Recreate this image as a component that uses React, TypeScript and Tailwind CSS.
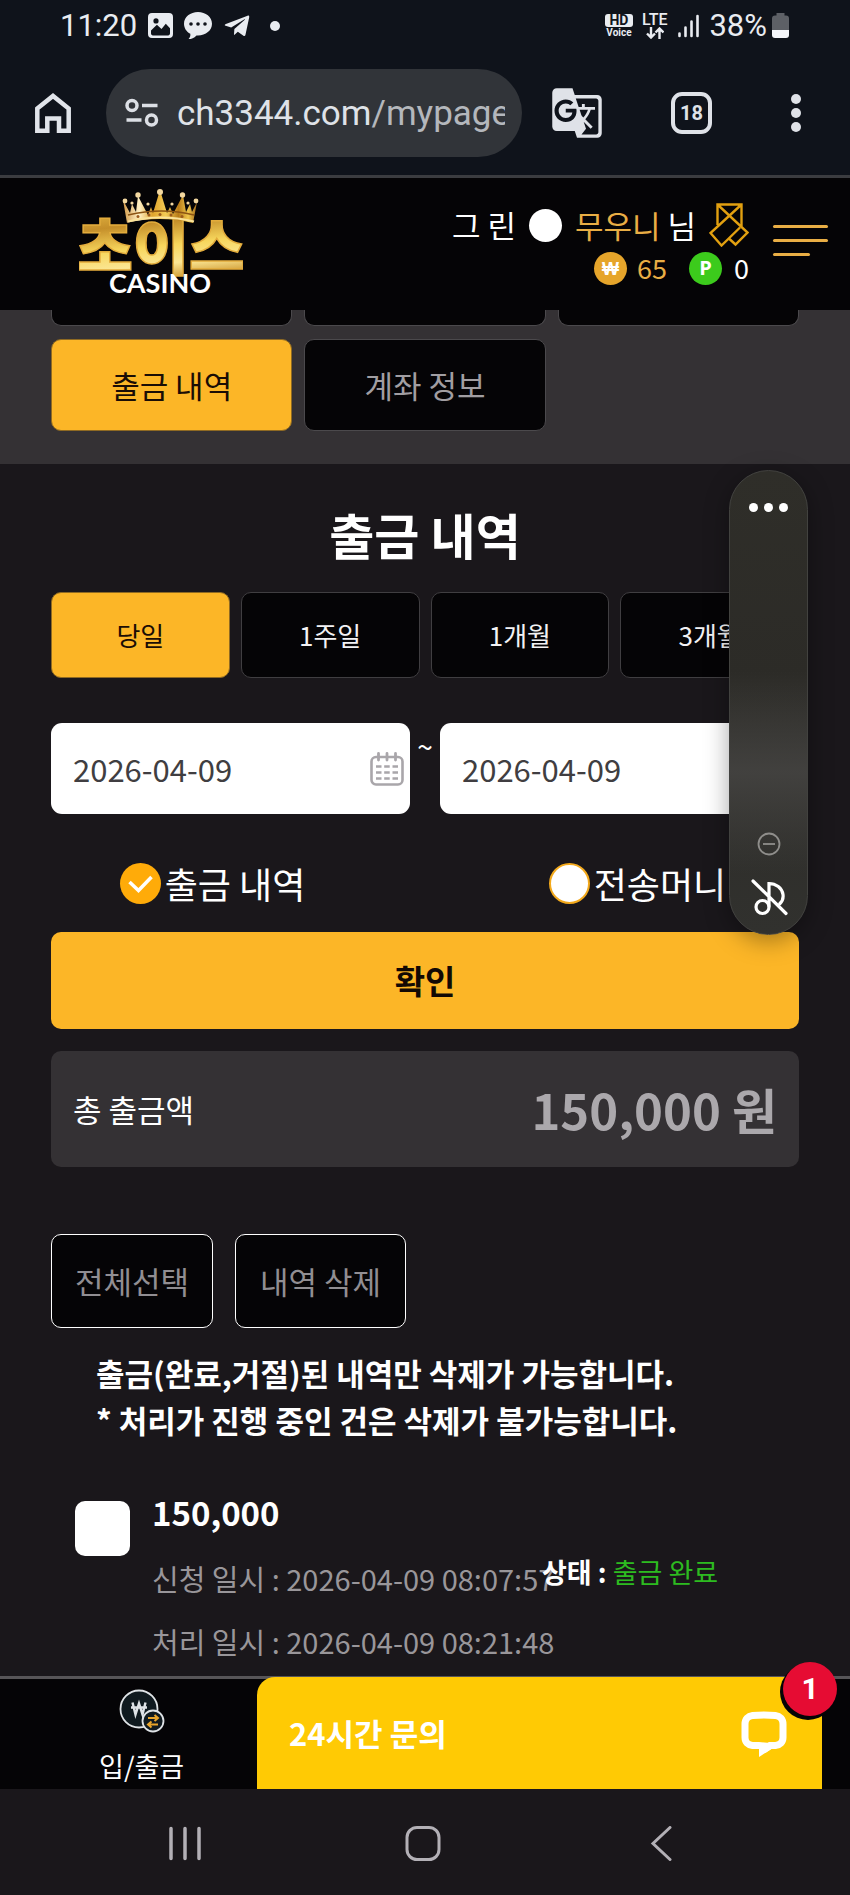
import { FaTelegramPlane } from "react-icons/fa";
import { MdGTranslate } from "react-icons/md";

function ImageIcon() {
  return (
    <svg width="25" height="26" viewBox="0 0 25 26" aria-hidden="true">
      <path
        fill="#e9ecf1"
        fillRule="evenodd"
        d="M4 0h17a4 4 0 0 1 4 4v17a4 4 0 0 1-4 4H4a4 4 0 0 1-4-4V4a4 4 0 0 1 4-4Zm-1 20.500c0 1 .8 1.900 1.900 1.900h15.200c1 0 1.900-.8 1.900-1.900v-5.300l-4.200-4.400-4.300 5.200-4.600-4.200L3 17.500Zm5-15.200a2.600 2.600 0 1 0 0 5.200 2.600 2.600 0 0 0 0-5.200Z"
      />
    </svg>
  );
}

function TalkIcon() {
  return (
    <svg width="28" height="28" viewBox="0 0 28 28" aria-hidden="true">
      <path fill="#e9ecf1" d="M14 0c7.700 0 14 5 14 11.700S21.700 23.400 14 23.400h-1.500C10 26 7.600 27 4.600 27c1.500-1.600 2-3.200 1.700-5.200C2.500 19.700 0 16 0 11.700 0 5 6.300 0 14 0Z" />
      <g fill="#10141c">
        <circle cx="7" cy="12" r="1.800" />
        <circle cx="14" cy="12" r="1.800" />
        <circle cx="21" cy="12" r="1.800" />
      </g>
    </svg>
  );
}

function StatusBar() {
  return (
    <div className="flex h-[52px] items-center justify-between pl-[60px] pr-[61px] font-[Roboto,sans-serif] text-[#e9ecf1]">
      <div className="flex items-center gap-[11px]">
        <span className="text-[31px] leading-9">11:20</span>
        <ImageIcon />
        <TalkIcon />
        <FaTelegramPlane className="size-7" aria-hidden="true" />
        <span className="ml-2 size-[10px] rounded-full bg-[#e9ecf1]" />
      </div>
      <div className="flex items-center gap-[9px]">
        <div className="flex w-7 flex-col items-center font-bold">
          <span className="w-full rounded-[3px] bg-[#e9ecf1] text-center text-[14px] leading-[13px] text-[#10141c]">HD</span>
          <span className="text-[10px] leading-[11px]">Voice</span>
        </div>
        <div className="flex flex-col items-center font-medium">
          <span className="text-[16px] leading-[14px]">LTE</span>
          <svg width="18" height="12" viewBox="0 0 18 12" fill="none" stroke="#e9ecf1" strokeWidth="2.400" aria-hidden="true">
            <path d="M5 0v10M1 6.500l4 4 4-4M13.500 12V1.500M9.500 5.500l4-4 4 4" />
          </svg>
        </div>
        <svg width="24" height="24" viewBox="0 0 24 24" stroke="#e9ecf1" strokeWidth="2.600" strokeLinecap="round" aria-hidden="true">
          <path d="M3.500 19.500V22M9.500 13.500V22M15.500 7.500V22M21.500 2V22" />
        </svg>
        <span className="text-[31px] leading-9">38%</span>
        <svg width="17" height="26" viewBox="0 0 17 26" className="-ml-1" aria-hidden="true">
          <path fill="#5d6066" d="M4.500 0h8v2.500H14a3 3 0 0 1 3 3V18H0V5.500a3 3 0 0 1 3-3h1.500Z" />
          <path fill="#f4f6fa" d="M0 17h17v5a3 3 0 0 1-3 3H3a3 3 0 0 1-3-3Z" />
        </svg>
      </div>
    </div>
  );
}

function BrowserBar() {
  return (
    <div className="flex items-center border-b-[3px] border-[#3b3c40] pb-[18px] pl-[34px] pr-[49px] pt-[17px] font-[Roboto,sans-serif]">
      <button type="button" aria-label="홈" className="shrink-0">
        <svg width="38" height="42" viewBox="0 0 38 42" fill="none" stroke="#e1e4ea" strokeWidth="4.500" aria-hidden="true">
          <path d="M3.300 16.500 19 4l15.700 12.500v22.200H25V26.500H13.300v12.200h-10Z" />
        </svg>
      </button>
      <div className="ml-[34px] flex h-[88px] min-w-0 flex-1 items-center rounded-full bg-[#313439] pl-[19px] pr-[17px]">
        <svg width="34" height="30" viewBox="0 0 34 30" fill="none" stroke="#dcdfe5" strokeWidth="3.500" className="shrink-0" aria-hidden="true">
          <circle cx="7" cy="7.500" r="5" />
          <circle cx="26.500" cy="22" r="5" />
          <path d="M17 7.500h15.500M1.500 22h15" />
        </svg>
        <span className="ml-[18px] block min-w-0 flex-1 overflow-hidden whitespace-nowrap pt-[2px] text-[35px] leading-[44px] text-[#dfe2e8]">
          ch3344.com<span className="text-[#b4b7bc]">/mypage</span>
        </span>
      </div>
      <button type="button" aria-label="번역" className="ml-7 shrink-0">
        <MdGTranslate className="size-[54px] text-[#dfe2e8]" aria-hidden="true" />
      </button>
      <button type="button" className="ml-[67px] flex h-[42px] w-[41px] shrink-0 items-center justify-center rounded-[11px] border-4 border-[#dfe2e8] text-[20px] font-bold leading-6 text-[#dfe2e8]">
        18
      </button>
      <button type="button" aria-label="메뉴" className="ml-[79px] flex shrink-0 flex-col gap-1">
        <span className="size-[10px] rounded-full bg-[#dfe2e8]" />
        <span className="size-[10px] rounded-full bg-[#dfe2e8]" />
        <span className="size-[10px] rounded-full bg-[#dfe2e8]" />
      </button>
    </div>
  );
}

function Logo() {
  return (
    <svg width="164" height="116" viewBox="0 0 164 116" role="img" aria-label="초이스 CASINO">
      <defs>
        <linearGradient id="gold" x1="0" y1="0" x2="0.200" y2="1">
          <stop offset="0" stopColor="#f6cf52" />
          <stop offset="0.350" stopColor="#c58f2a" />
          <stop offset="0.600" stopColor="#f7d65c" />
          <stop offset="0.800" stopColor="#fbe694" />
          <stop offset="1" stopColor="#c88f24" />
        </linearGradient>
        <linearGradient id="crown" x1="0" y1="0" x2="1" y2="0">
          <stop offset="0" stopColor="#d39a4a" />
          <stop offset="0.220" stopColor="#fff0c4" />
          <stop offset="0.400" stopColor="#dfa32c" />
          <stop offset="0.580" stopColor="#f3cb55" />
          <stop offset="0.750" stopColor="#b77b18" />
          <stop offset="0.880" stopColor="#f0c64a" />
          <stop offset="1" stopColor="#a26a1c" />
        </linearGradient>
      </defs>
      <text
        x="82"
        y="84"
        textAnchor="middle"
        fontFamily="'Noto Sans CJK KR', sans-serif"
        fontWeight="900"
        fontSize="61"
        fill="url(#gold)"
        stroke="#e3ac3c"
        strokeWidth="1.500"
      >
        초이스
      </text>
      <path
        fill="url(#crown)"
        d="M48 37 44 14l7 13 2-9 4 8 2-16 10 19 3-8 2 6 7-23 7 23 3-6 3 7 10-19 3 17 4-8 2 8 5-10-4 21q-33-8-67 0Z"
      />
      <path d="M49 29q34-8 66 0" fill="none" stroke="#8c5413" strokeWidth="1.500" />
      <path d="M49 35.500q33-8 66 0" fill="none" stroke="#fbe39a" strokeWidth="2" />
      <g fill="#f3d8a0">
        <circle cx="46" cy="15" r="2.400" />
        <circle cx="59" cy="9" r="2.700" />
        <circle cx="81" cy="6" r="3" />
        <circle cx="103.500" cy="9" r="2.700" />
        <circle cx="117" cy="15" r="2.400" />
        <circle cx="53" cy="17" r="1.600" />
        <circle cx="69" cy="18" r="1.600" />
        <circle cx="93" cy="18" r="1.600" />
        <circle cx="109" cy="17" r="1.600" />
      </g>
      <g fill="#9c5a1c">
        <circle cx="59" cy="30.500" r="1.500" />
        <circle cx="70" cy="29" r="1.500" />
        <circle cx="81" cy="28.500" r="1.500" />
        <circle cx="92" cy="29" r="1.500" />
        <circle cx="103" cy="30.500" r="1.500" />
      </g>
      <text x="81" y="107" textAnchor="middle" fontFamily="Lato, sans-serif" fontWeight="700" fontSize="27" fill="#fff">
        CASINO
      </text>
    </svg>
  );
}

function SiteHeader() {
  return (
    <header className="flex items-start justify-between bg-[#050406] pb-2 pl-[79px] pr-[22px] pt-2">
      <a href="#home">
        <Logo />
      </a>
      <div className="flex items-start gap-6 pt-[17px] text-white">
        <div className="flex flex-col items-end gap-[3px]">
          <div className="flex h-11 items-center gap-[13px] text-[31px] leading-[44px]">
            <span>그 린</span>
            <span className="size-[33px] rounded-full bg-white" />
            <span>
              <span className="text-[#e9ae45]">무우니</span> 님
            </span>
            <svg width="40" height="44" viewBox="0 0 40 44" fill="none" stroke="#e2a010" strokeWidth="2.400" aria-hidden="true">
              <path d="M8.500 22V1.500h24V24M8.500 1.500l30 28L26.500 41.500l-6-5.500M32.500 1.500 1.500 30 12.500 42.500 31 24.500" />
            </svg>
          </div>
          <div className="flex h-9 items-center text-[27px] leading-9">
            <span className="flex size-[33px] items-center justify-center rounded-full bg-[#e6a52b] font-['Open_Sans',sans-serif] text-[18px] font-extrabold">₩</span>
            <span className="ml-[10px] text-[#e9ae45]">65</span>
            <span className="ml-[22px] flex size-[33px] items-center justify-center rounded-full bg-[#3ccb1c] font-['Open_Sans',sans-serif] text-[20px] font-bold">P</span>
            <span className="ml-3">0</span>
          </div>
        </div>
        <button type="button" aria-label="전체 메뉴" className="mt-[22px] flex w-[55px] flex-col gap-[11px]">
          <span className="h-[3px] w-full rounded-full bg-[#e9ae45]" />
          <span className="h-[3px] w-full rounded-full bg-[#e9ae45]" />
          <span className="h-[3px] w-[37px] rounded-full bg-[#e9ae45]" />
        </button>
      </div>
    </header>
  );
}

function SectionNav() {
  return (
    <nav className="grid grid-cols-3 gap-x-3 gap-y-[13px] bg-[#343134] px-[51px] pb-[33px] text-[31px] leading-10">
      {[0, 1, 2].map((n) => (
        <span key={n} className="h-4 rounded-b-[10px] border border-t-0 border-[#4b494c] bg-[#050406]" />
      ))}
      <a href="#withdrawals" className="rounded-[10px] border border-[#8f6a22] bg-[#fcb627] py-[25px] text-center text-[#1a0d05]">
        출금 내역
      </a>
      <a href="#account" className="rounded-[10px] border border-[#4b494c] bg-[#050406] py-[25px] text-center text-[#a19ea2]">
        계좌 정보
      </a>
    </nav>
  );
}

function CalendarIcon() {
  return (
    <svg width="34" height="34" viewBox="0 0 34 34" fill="none" stroke="#a9a6aa" aria-hidden="true">
      <rect x="1.500" y="5" width="31" height="27.500" rx="4.500" strokeWidth="2.600" />
      <path strokeWidth="2.800" strokeLinecap="round" d="M8.500 1.500V8M17 1.500V8M25.500 1.500V8" />
      <path strokeWidth="2.600" d="M6 14.500h5.500M14.200 14.500h5.500M22.500 14.500H28M6 20.500h5.500M14.200 20.500h5.500M22.500 20.500H28M6 26.500h5.500M14.200 26.500h5.500M22.500 26.500H28" />
    </svg>
  );
}

function DateField({ label }: { label: string }) {
  return (
    <div className="flex h-[91px] min-w-0 flex-1 items-center rounded-[11px] bg-white pl-[22px] pr-[6px]">
      <input
        type="text"
        aria-label={label}
        defaultValue="2026-04-09"
        className="h-full min-w-0 flex-1 bg-transparent text-[31px] text-[#403e41] outline-none"
      />
      <button type="button" aria-label="달력 열기">
        <CalendarIcon />
      </button>
    </div>
  );
}

function SearchForm() {
  return (
    <form>
      <div className="grid grid-cols-4 gap-[11px] text-[26px] leading-9 text-[#f3f2f4]">
        <button type="button" className="rounded-[10px] border border-[#8f6a22] bg-[#fcb627] py-6 text-[#1a0d05]">당일</button>
        <button type="button" className="rounded-[10px] border border-[#403e41] bg-[#050406] py-6">1주일</button>
        <button type="button" className="rounded-[10px] border border-[#403e41] bg-[#050406] py-6">1개월</button>
        <button type="button" className="rounded-[10px] border border-[#403e41] bg-[#050406] py-6">3개월</button>
      </div>
      <div className="mt-[45px] flex items-start">
        <DateField label="시작일" />
        <span className="w-[30px] pt-[3px] text-center text-[28px] leading-10 text-white">~</span>
        <DateField label="종료일" />
      </div>
      <div className="-mx-[51px] grid grid-cols-2 pb-[21px] pt-[42px] text-[36px] leading-[55px] text-white">
        <label className="flex items-center justify-center gap-1">
          <span className="relative flex">
            <input type="radio" name="kind" defaultChecked className="size-[41px] appearance-none rounded-full bg-[#ffab09]" />
            <svg viewBox="0 0 41 41" fill="none" stroke="#fff" strokeWidth="3.500" className="pointer-events-none absolute inset-0" aria-hidden="true">
              <path d="m9.500 19 9 8.500L31.500 14" />
            </svg>
          </span>
          출금 내역
        </label>
        <label className="flex items-center justify-center gap-1">
          <input type="radio" name="kind" className="size-[41px] appearance-none rounded-full border-2 border-[#f3a91c] bg-white" />
          전송머니
        </label>
      </div>
      <button type="submit" className="w-full rounded-[10px] bg-[#fcb627] py-6 text-[33px] font-bold leading-[49px] text-[#120904]">
        확인
      </button>
    </form>
  );
}

function FloatingPanel() {
  return (
    <aside className="absolute right-[42px] top-[6px] flex h-[465px] w-[79px] flex-col items-center justify-between rounded-full border border-[#42423f] bg-linear-to-b from-[#2f2e29] via-[#2c2b27] via-45% to-[#31312e] pb-[18px] pt-8 shadow-[0_6px_24px_rgba(0,0,0,0.35)]">
      <span className="pointer-events-none absolute inset-x-0 bottom-[60px] top-[200px] bg-linear-to-b from-transparent via-[#444341]/90 to-transparent" />
      <button type="button" aria-label="더보기" className="relative flex gap-[6px]">
        <span className="size-[9px] rounded-full bg-white" />
        <span className="size-[9px] rounded-full bg-white" />
        <span className="size-[9px] rounded-full bg-white" />
      </button>
      <div className="relative flex flex-col items-center gap-[22px]">
        <svg width="24" height="24" viewBox="0 0 24 24" fill="none" stroke="#8f8e8b" strokeWidth="1.800" aria-hidden="true">
          <circle cx="12" cy="12" r="10.500" />
          <path d="M6 12h12" />
        </svg>
        <svg width="38" height="38" viewBox="0 0 38 38" fill="none" stroke="#fff" strokeWidth="3.200" strokeLinecap="round" aria-hidden="true">
          <path d="M3 3 36 35.500M19 28V5.500c7 0 13 4.500 14 11 .5 3.500-.5 6.500-3 9" />
          <circle cx="12.500" cy="29" r="6.500" />
        </svg>
      </div>
    </aside>
  );
}

function Record() {
  return (
    <article className="relative mt-[38px] flex gap-[22px] pb-[3px] pl-6">
      <input type="checkbox" aria-label="150,000 선택" className="mt-5 size-[55px] appearance-none rounded-[10px] bg-white" />
      <div className="text-[29px] leading-[63px] text-[#99969a]">
        <p className="pb-[3px] text-[33px] font-bold text-white">150,000</p>
        <p>신청 일시 : 2026-04-09 08:07:57</p>
        <p>처리 일시 : 2026-04-09 08:21:48</p>
      </div>
      <p className="absolute left-[491px] top-[71px] text-[27px] font-bold leading-10 text-white">
        상태 : <span className="font-normal text-[#2dbb20]">출금 완료</span>
      </p>
    </article>
  );
}

function BottomBar() {
  return (
    <div className="relative border-t-[3px] border-[#575558] bg-[#050406]">
      <a href="#cash" className="flex w-1/3 flex-col items-center pb-[3px] pt-[10px] text-[27px] leading-10 text-white">
        <svg width="46" height="46" viewBox="0 0 46 46" fill="none" stroke="#dfe3e6" strokeWidth="1.800" className="mb-[11px]" aria-hidden="true">
          <circle cx="20" cy="20" r="18.500" fill="#101a1f" />
          <path strokeWidth="2.400" d="m13.500 13.500 3 12L20 14.500l3.500 11 3-12M12 18.500h16" />
          <circle cx="34" cy="32" r="10.500" fill="#101a1f" />
          <path stroke="#e9a52b" strokeWidth="2" d="M29 29h9.500M35.500 26l3.500 3-3.500 3M39 35.500h-9.500M32.500 32.500l-3.500 3 3.500 3" />
        </svg>
        입/출금
      </a>
      <button
        type="button"
        className="absolute -top-[2px] bottom-0 left-[257px] right-[28px] flex items-center justify-between rounded-tl-[18px] bg-[#ffca04] pl-8 pr-[34px] text-[31px] font-bold text-white"
      >
        24시간 문의
        <svg width="48" height="48" viewBox="0 0 48 48" fill="none" aria-hidden="true">
          <path stroke="#fff" strokeWidth="7" d="M19 36.500h-6.500c-4.500-.5-7.500-3.500-7.500-8V15C5 10 8 7 12.500 6.500 20 5.800 28 5.800 35.500 6.500 40 7 43 10 43 15v13.500c0 4.500-3 7.500-7.500 8H30l-6.500 4.500" />
          <path fill="#fff" d="M19 33v15l14-9-3-5Z" />
        </svg>
      </button>
      <span className="absolute -top-[17px] right-[13px] flex size-[54px] items-center justify-center rounded-full bg-[#e60c33] font-[Roboto,sans-serif] text-[30px] font-bold leading-9 text-white shadow-[-2px_3px_0_1px_#050406]">
        1
      </span>
    </div>
  );
}

function SystemNav() {
  return (
    <div className="flex items-center justify-between bg-[#1a171b] pb-[34px] pl-[168px] pr-[178px] pt-[37px]">
      <button type="button" aria-label="최근 앱">
        <svg width="34" height="35" viewBox="0 0 34 35" stroke="#b3b0b6" strokeWidth="3.500" strokeLinecap="round" aria-hidden="true">
          <path d="M3 2.500v30M17 2.500v30M31 2.500v30" />
        </svg>
      </button>
      <button type="button" aria-label="홈 화면" className="mr-[6px]">
        <svg width="36" height="35" viewBox="0 0 36 35" fill="none" stroke="#b3b0b6" strokeWidth="3" aria-hidden="true">
          <rect x="2" y="1.500" width="32" height="32" rx="10" />
        </svg>
      </button>
      <button type="button" aria-label="뒤로">
        <svg width="22" height="35" viewBox="0 0 22 35" fill="none" stroke="#b3b0b6" strokeWidth="3" strokeLinecap="round" aria-hidden="true">
          <path d="M20 1.500 3 17.500l17 16" />
        </svg>
      </button>
    </div>
  );
}

export default function App() {
  return (
    <div className="flex min-h-screen flex-col bg-[#1a171b] font-['Noto_Sans_CJK_KR',sans-serif]">
      <div className="bg-[#0f131b]">
        <StatusBar />
        <BrowserBar />
      </div>
      <SiteHeader />
      <SectionNav />
      <main className="relative px-[51px]">
        <h1 className="pb-[25px] pt-[37px] text-center text-[49px] font-bold leading-[66px] text-white">출금 내역</h1>
        <SearchForm />
        <dl className="mt-[22px] flex items-center justify-between rounded-[10px] bg-[#343134] px-[22px] py-[25px]">
          <dt className="text-[31px] leading-10 text-white">총 출금액</dt>
          <dd className="text-[49px] font-bold leading-[66px] text-[#aba8ac]">150,000 원</dd>
        </dl>
        <div className="mt-[67px] flex gap-[22px] text-[31px] leading-[44px] text-[#918e92]">
          <button type="button" className="rounded-[10px] border border-white bg-[#050406] px-[23px] py-6">전체선택</button>
          <button type="button" className="rounded-[10px] border border-white bg-[#050406] px-6 py-6">내역 삭제</button>
        </div>
        <p className="mt-[21px] pl-[45px] text-[31px] font-bold leading-[47px] text-white">
          출금(완료,거절)된 내역만 삭제가 가능합니다.
          <br />* 처리가 진행 중인 건은 삭제가 불가능합니다.
        </p>
        <Record />
        <FloatingPanel />
      </main>
      <BottomBar />
      <SystemNav />
    </div>
  );
}
